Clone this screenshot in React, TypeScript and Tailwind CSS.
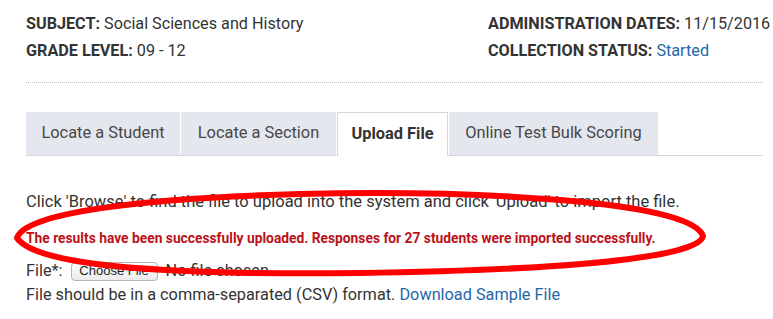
import React from "react";

export default function App() {
  return (
    <div className="relative w-[773px] h-[319px] overflow-hidden bg-white font-['Roboto',sans-serif] text-[#333]">
      <div className="w-[900px] pl-[26px] pt-[10px]">
        <div className="flex text-[16.2px] leading-[27px]">
          <div className="w-[462px]">
            <div>
              <span className="font-bold">SUBJECT:</span> Social Sciences and History
            </div>
            <div>
              <span className="font-bold">GRADE LEVEL:</span> 09 - 12
            </div>
          </div>
          <div>
            <div>
              <span className="font-bold">ADMINISTRATION DATES:</span> 11/15/2016
            </div>
            <div>
              <span className="font-bold">COLLECTION STATUS:</span>{" "}
              <span className="text-[#1f68a8]">Started</span>
            </div>
          </div>
        </div>
        <div className="mt-[18px] w-[737px] border-t border-dotted border-[#c4b8c4]" />
        <div className="mt-[29px] flex w-[737px] gap-[1px] border-b border-[#d6d6d6] text-[16.4px]">
          <div className="flex h-[43px] w-[154px] items-center justify-center bg-[#e5e7ee] text-[#484848]">
            Locate a Student
          </div>
          <div className="flex h-[43px] w-[155px] items-center justify-center bg-[#e5e7ee] text-[#484848]">
            Locate a Section
          </div>
          <div className="-mb-[1px] flex h-[44px] w-[111px] items-center justify-center border border-b-0 border-[#d6d6d6] bg-white font-bold text-[#333]">
            Upload File
          </div>
          <div className="flex h-[43px] w-[209px] items-center justify-center bg-[#e5e7ee] text-[#484848]">
            Online Test Bulk Scoring
          </div>
        </div>
        <div className="mt-[34px] text-[16.5px] leading-[24px]">
          Click 'Browse' to find the file to upload into the system and click 'Upload' to import the file.
        </div>
        <div className="mt-[14px] text-[13.8px] font-bold leading-[20px] text-[#bb1219]">
          The results have been successfully uploaded. Responses for 27 students were imported successfully.
        </div>
        <div className="mt-[11px] flex h-[24px] items-center text-[16.3px]">
          <span>File*:</span>
          <span className="ml-[8px] flex h-[19px] w-[87px] items-center justify-center rounded-[4px] border border-[#b5b5b5] bg-gradient-to-b from-[#fdfdfd] to-[#ececec] font-['Liberation_Sans',sans-serif] text-[13px] text-[#222]">
            Choose File
          </span>
          <span className="ml-[8px]">No file chosen</span>
        </div>
        <div className="text-[16.3px] leading-[24px]">
          File should be in a comma-separated (CSV) format.{" "}
          <span className="text-[#1f68a8]">Download Sample File</span>
        </div>
      </div>
      <svg
        className="pointer-events-none absolute left-0 top-0"
        width="773"
        height="319"
        viewBox="0 0 773 319"
      >
        <path
          d="M17 238 C 24 213 140 198 300 194 C 470 190 690 200 703 236 C 700 258 560 270 360 273 C 180 275 38 268 17 238 Z"
          fill="none"
          stroke="#ff0000"
          strokeWidth="6"
          strokeLinejoin="round"
        />
      </svg>
    </div>
  );
}
